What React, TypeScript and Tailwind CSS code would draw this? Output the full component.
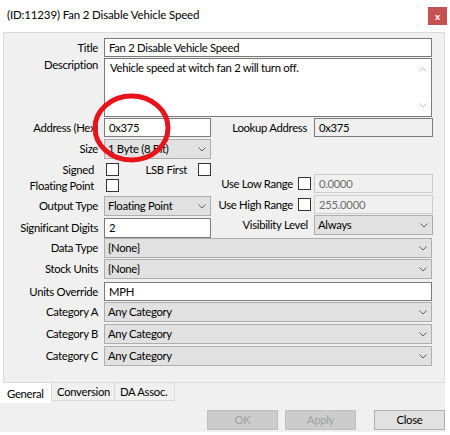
import React from "react";

const Chevron = () => (
  <svg width="8" height="5" viewBox="0 0 8 5" className="shrink-0">
    <path d="M0.5 0.5 L4 4 L7.5 0.5" fill="none" stroke="#606060" strokeWidth="1" />
  </svg>
);

function Label({ children, className }: { children: React.ReactNode; className?: string }) {
  return <div className={"w-[94px] shrink-0 whitespace-nowrap text-right " + (className ?? "")}>{children}</div>;
}

function Combo({ text, className }: { text: string; className: string }) {
  return (
    <div className={"flex h-[20px] shrink-0 items-center border border-[#adadad] bg-[#e1e1e1] pl-[3px] pr-[4px] " + className}>
      <span className="flex-1 whitespace-nowrap">{text}</span>
      <Chevron />
    </div>
  );
}

const Check = () => <div className="h-[13px] w-[13px] shrink-0 border border-[#333333] bg-white" />;

export default function App() {
  return (
    <div className="relative h-[435px] w-[450px] overflow-hidden bg-white font-['Lato',sans-serif] text-[11.3px] leading-[14px] tracking-[-0.3px] text-black">
      {/* Title bar */}
      <div className="flex h-[32px] items-start">
        <div className="pl-[7px] pt-[8px] text-[11.5px] tracking-[-0.15px] whitespace-nowrap">(ID:11239) Fan 2 Disable Vehicle Speed</div>
        <div className="ml-auto mr-[3px] mt-[7px] flex h-[18px] w-[19px] items-center justify-center bg-[#c75050] text-[10px] font-bold leading-none tracking-normal text-white">
          x
        </div>
      </div>

      {/* Tab page */}
      <div className="ml-[3px] h-[351px] w-[442px] border border-[#dadada] bg-[#f0f0f0]">
        <div className="flex flex-col pr-[11px] pt-[5px]">
          {/* Title */}
          <div className="flex h-[19px] items-center">
            <Label>Title</Label>
            <div className="ml-[6px] flex h-[19px] w-[328px] items-center border border-[#7a7a7a] bg-white pl-[4px] whitespace-nowrap">
              Fan 2 Disable Vehicle Speed
            </div>
          </div>
          {/* Description */}
          <div className="mt-[1px] flex h-[59px] items-start">
            <Label>Description</Label>
            <div className="ml-[6px] flex h-[59px] w-[328px] border border-[#7a7a7a] bg-white">
              <div className="flex-1 pl-[5px] pt-[2px] whitespace-nowrap">Vehicle speed at witch fan 2 will turn off.</div>
              <div className="flex w-[17px] flex-col items-center justify-between py-[8px]">
                <svg width="8" height="5" viewBox="0 0 8 5">
                  <path d="M0.5 4.5 L4 1 L7.5 4.5" fill="none" stroke="#c2c2c2" strokeWidth="1" />
                </svg>
                <svg width="8" height="5" viewBox="0 0 8 5">
                  <path d="M0.5 0.5 L4 4 L7.5 0.5" fill="none" stroke="#c2c2c2" strokeWidth="1" />
                </svg>
              </div>
            </div>
          </div>
          {/* Address */}
          <div className="mt-[1px] flex h-[19px] items-center">
            <Label>Address (Hex)</Label>
            <div className="ml-[6px] flex h-[19px] w-[107px] items-center border border-[#7a7a7a] bg-white pl-[4px]">0x375</div>
            <div className="flex flex-1 items-center justify-end">
              <span className="whitespace-nowrap">Lookup Address</span>
              <div className="ml-[7px] flex h-[19px] w-[119px] items-center border border-[#7a7a7a] bg-[#f0f0f0] pl-[4px]">0x375</div>
            </div>
          </div>
          {/* Size */}
          <div className="mt-[2px] flex h-[20px] items-center">
            <Label>Size</Label>
            <Combo text="1 Byte (8 Bit)" className="ml-[6px] w-[107px]" />
          </div>
          {/* Middle section */}
          <div className="flex h-[78px]">
            <div className="flex w-[207px] flex-col">
              <div className="mt-[4px] flex h-[13px] items-center">
                <Label className="pr-[4px]">Signed</Label>
                <div className="ml-[8px]">
                  <Check />
                </div>
                <span className="ml-auto whitespace-nowrap">LSB First</span>
                <div className="ml-[11px]">
                  <Check />
                </div>
              </div>
              <div className="mt-[3px] flex h-[13px] items-center">
                <Label className="pr-[4px]">Floating Point</Label>
                <div className="ml-[8px]">
                  <Check />
                </div>
              </div>
              <div className="mt-[4px] flex h-[20px] items-center">
                <Label>Output Type</Label>
                <Combo text="Floating Point" className="ml-[6px] w-[107px]" />
              </div>
              <div className="mt-[2px] flex h-[20px] items-center">
                <Label>Significant Digits</Label>
                <div className="ml-[6px] flex h-[20px] w-[107px] items-center border border-[#7a7a7a] bg-white pl-[4px]">2</div>
              </div>
            </div>
            <div className="flex flex-1 flex-col items-end">
              <div className="mt-[15px] flex h-[19px] items-center">
                <span className="whitespace-nowrap">Use Low Range</span>
                <div className="ml-[5px]">
                  <Check />
                </div>
                <div className="ml-[3px] flex h-[19px] w-[119px] items-center border border-[#cccccc] bg-[#f0f0f0] pl-[4px] text-[#6d6d6d]">
                  0.0000
                </div>
              </div>
              <div className="mt-[2px] flex h-[19px] items-center">
                <span className="whitespace-nowrap">Use High Range</span>
                <div className="ml-[5px]">
                  <Check />
                </div>
                <div className="ml-[3px] flex h-[19px] w-[119px] items-center border border-[#cccccc] bg-[#f0f0f0] pl-[4px] text-[#6d6d6d]">
                  255.0000
                </div>
              </div>
              <div className="mt-[1px] flex h-[20px] items-center">
                <span className="whitespace-nowrap">Visibility Level</span>
                <Combo text="Always" className="ml-[6px] w-[119px]" />
              </div>
            </div>
          </div>
          {/* Data Type */}
          <div className="mt-[1px] flex h-[20px] items-center">
            <Label>Data Type</Label>
            <Combo text="{None}" className="ml-[6px] w-[328px]" />
          </div>
          <div className="mt-[1px] flex h-[20px] items-center">
            <Label>Stock Units</Label>
            <Combo text="{None}" className="ml-[6px] w-[328px]" />
          </div>
          <div className="mt-[3px] flex h-[19px] items-center">
            <Label>Units Override</Label>
            <div className="ml-[6px] flex h-[19px] w-[328px] items-center border border-[#7a7a7a] bg-white pl-[4px]">MPH</div>
          </div>
          <div className="mt-[1px] flex h-[20px] items-center">
            <Label>Category A</Label>
            <Combo text="Any Category" className="ml-[6px] w-[328px]" />
          </div>
          <div className="mt-[2px] flex h-[20px] items-center">
            <Label>Category B</Label>
            <Combo text="Any Category" className="ml-[6px] w-[328px]" />
          </div>
          <div className="mt-[2px] flex h-[20px] items-center">
            <Label>Category C</Label>
            <Combo text="Any Category" className="ml-[6px] w-[328px]" />
          </div>
        </div>
      </div>

      {/* Tabs and buttons */}
      <div className="flex h-[49px] w-[445px] flex-col bg-[#f0f0f0]">
        <div className="flex h-[20px] items-start">
          <div className="flex h-[20px] w-[51px] items-center bg-white pl-[7px] pt-[2px]">General</div>
          <div className="flex h-[18px] w-[64px] items-center border-b border-l border-r border-[#d9d9d9] pl-[5px]">Conversion</div>
          <div className="flex h-[18px] w-[60px] items-center border-b border-r border-[#d9d9d9] pl-[5px] whitespace-nowrap">DA Assoc.</div>
        </div>
        <div className="mt-[7px] flex h-[20px]">
          <div className="ml-[207px] flex h-[20px] w-[71px] items-center justify-center border border-[#bfbfbf] bg-[#cccccc] text-[#a0a0a0]">OK</div>
          <div className="ml-[7px] flex h-[20px] w-[71px] items-center justify-center border border-[#bfbfbf] bg-[#cccccc] text-[#a0a0a0]">Apply</div>
          <div className="ml-[18px] flex h-[20px] w-[71px] items-center justify-center border border-[#adadad] bg-[#e1e1e1]">Close</div>
        </div>
      </div>

      {/* Red annotation circle */}
      <svg className="pointer-events-none absolute left-0 top-0" width="450" height="435" viewBox="0 0 450 435">
        <ellipse cx="131.5" cy="128" rx="36.5" ry="32" fill="none" stroke="#e8141c" strokeWidth="5" />
      </svg>
    </div>
  );
}
